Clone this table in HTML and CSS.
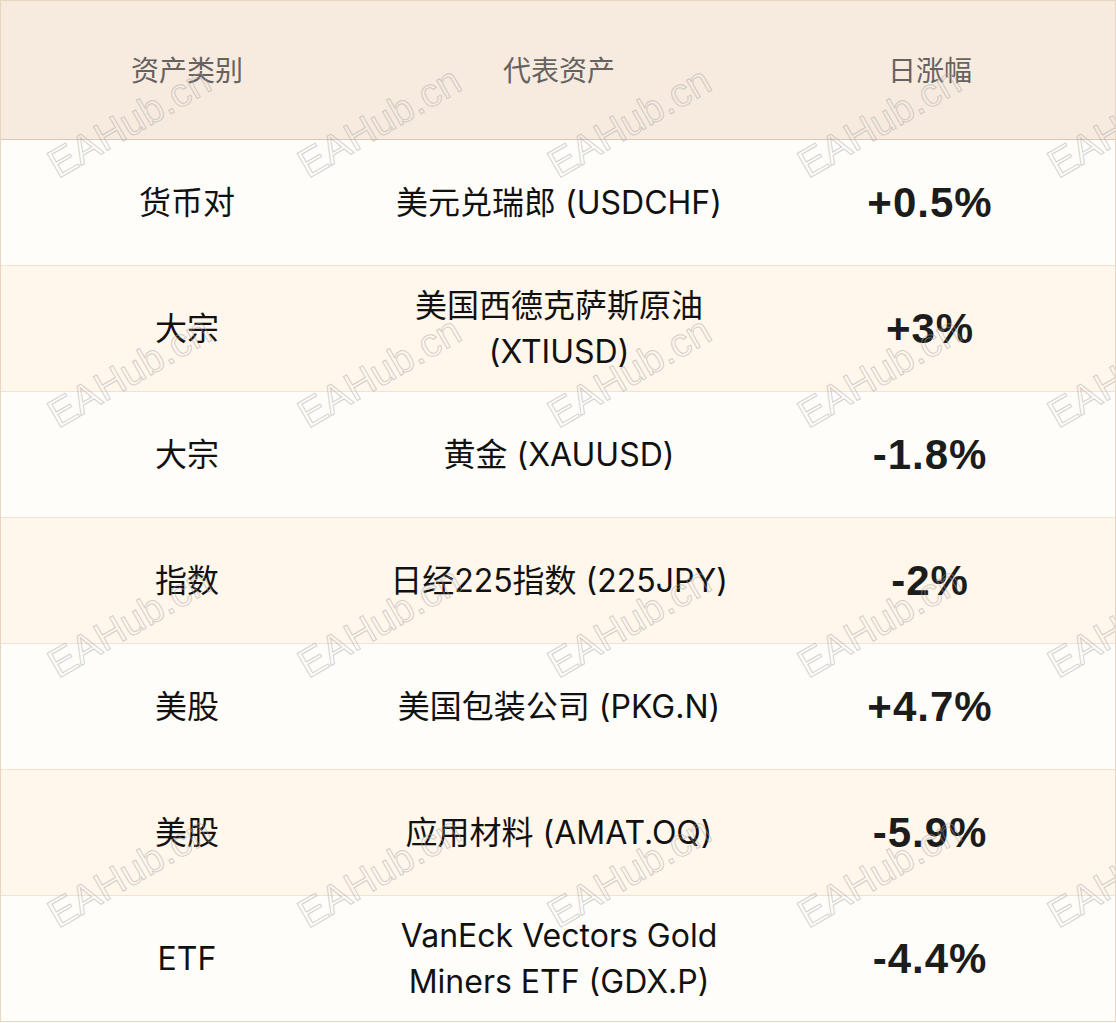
FILE: index.html
```html
<!DOCTYPE html>
<html lang="zh-CN">
<head>
<meta charset="utf-8">
<title>资产日涨幅</title>
<link rel="stylesheet" href="styles.css">
</head>
<body>
<div class="board">
  <div class="row head">
    <div class="cell">资产类别</div>
    <div class="cell">代表资产</div>
    <div class="cell">日涨幅</div>
  </div>
  <div class="row odd">
    <div class="cell">货币对</div>
    <div class="cell">美元兑瑞郎 (USDCHF)</div>
    <div class="cell pct">+0.5%</div>
  </div>
  <div class="row even">
    <div class="cell">大宗</div>
    <div class="cell">美国西德克萨斯原油 (XTIUSD)</div>
    <div class="cell pct">+3%</div>
  </div>
  <div class="row odd">
    <div class="cell">大宗</div>
    <div class="cell">黄金 (XAUUSD)</div>
    <div class="cell pct">-1.8%</div>
  </div>
  <div class="row even">
    <div class="cell">指数</div>
    <div class="cell">日经225指数 (225JPY)</div>
    <div class="cell pct">-2%</div>
  </div>
  <div class="row odd">
    <div class="cell">美股</div>
    <div class="cell">美国包装公司 (PKG.N)</div>
    <div class="cell pct">+4.7%</div>
  </div>
  <div class="row even">
    <div class="cell">美股</div>
    <div class="cell">应用材料 (AMAT.OQ)</div>
    <div class="cell pct">-5.9%</div>
  </div>
  <div class="row odd last">
    <div class="cell">ETF</div>
    <div class="cell">VanEck Vectors Gold Miners ETF (GDX.P)</div>
    <div class="cell pct">-4.4%</div>
  </div>

  <div class="wm-layer" aria-hidden="true">
    <div class="wm"><span>EAHub.cn</span></div><div class="wm"><span>EAHub.cn</span></div><div class="wm"><span>EAHub.cn</span></div><div class="wm"><span>EAHub.cn</span></div><div class="wm"><span>EAHub.cn</span></div>
    <div class="wm"><span>EAHub.cn</span></div><div class="wm"><span>EAHub.cn</span></div><div class="wm"><span>EAHub.cn</span></div><div class="wm"><span>EAHub.cn</span></div><div class="wm"><span>EAHub.cn</span></div>
    <div class="wm"><span>EAHub.cn</span></div><div class="wm"><span>EAHub.cn</span></div><div class="wm"><span>EAHub.cn</span></div><div class="wm"><span>EAHub.cn</span></div><div class="wm"><span>EAHub.cn</span></div>
    <div class="wm"><span>EAHub.cn</span></div><div class="wm"><span>EAHub.cn</span></div><div class="wm"><span>EAHub.cn</span></div><div class="wm"><span>EAHub.cn</span></div><div class="wm"><span>EAHub.cn</span></div>
  </div>
</div>
</body>
</html>
```

FILE: styles.css
```css
html, body {
  margin: 0;
  padding: 0;
  background: #fffdf9;
}

.board {
  position: relative;
  width: 1116px;
  box-sizing: border-box;
  border: 1px solid #e8d6c4;
  font-family: "Inter", "Noto Sans CJK SC", sans-serif;
  color: #111;
  overflow: hidden;
}

.row {
  display: grid;
  grid-template-columns: 372px 372px 1fr;
  height: 126px;
  box-sizing: border-box;
  border-bottom: 1px solid #f1e2d4;
}

.row.head {
  height: 139px;
  background: #f7ebdf;
  border-bottom: 1px solid #dcc7b4;
}

.row.odd { background: #fffdf9; }
.row.even { background: #fff6ec; }
.row.last { border-bottom: none; height: 125px; }

.cell {
  display: flex;
  align-items: center;
  justify-content: center;
  text-align: center;
  padding: 0 14px;
  font-size: 32px;
  line-height: 46px;
}

.head .cell {
  font-size: 28px;
  color: #666260;
  padding-top: 1px;
}

.cell.pct {
  font-family: "Liberation Sans", "Arial", sans-serif;
  font-weight: 700;
  font-size: 42px;
  letter-spacing: 1px;
  color: #1c1c1c;
}

.wm-layer {
  position: absolute;
  left: 0;
  top: 0;
  width: 1250px;
  height: 1000px;
  display: grid;
  grid-template-columns: repeat(5, 250px);
  grid-auto-rows: 250px;
  pointer-events: none;
}

.wm {
  position: relative;
}

.wm span {
  position: absolute;
  left: 57px;
  top: 144px;
  font-family: "Liberation Sans", sans-serif;
  font-size: 40px;
  line-height: 40px;
  white-space: nowrap;
  color: transparent;
  -webkit-text-stroke: 1px rgba(165, 165, 165, 0.5);
  transform-origin: 0 34px;
  transform: rotate(-30deg);
}
```
